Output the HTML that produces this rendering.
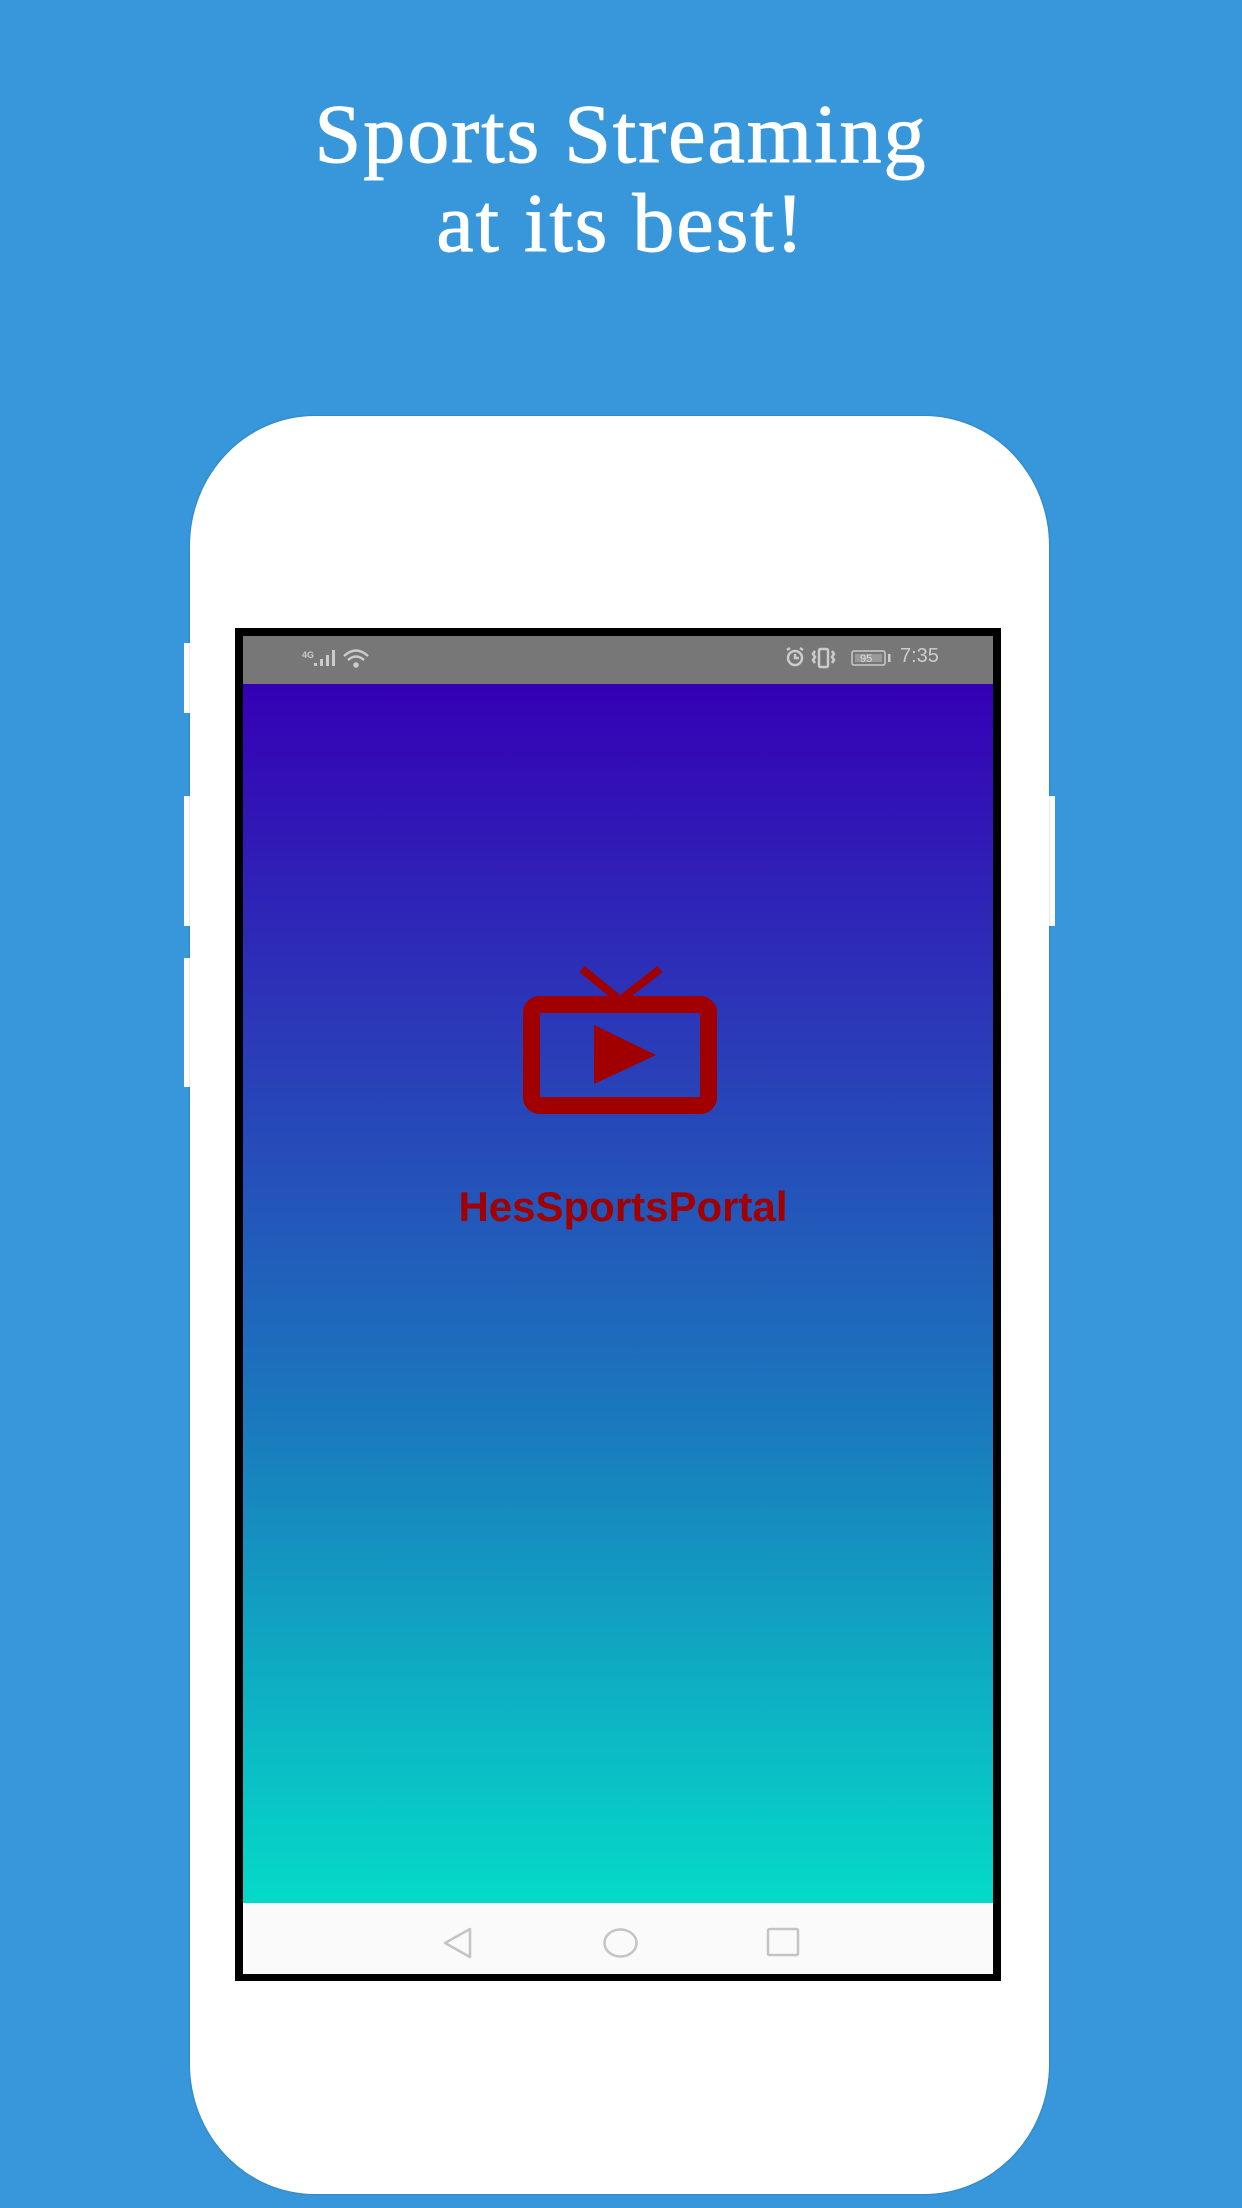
<!DOCTYPE html>
<html><head><meta charset="utf-8">
<style>
html,body{margin:0;padding:0}
body{width:1242px;height:2208px;background:#3797da;position:relative;overflow:hidden;font-family:"Liberation Sans",sans-serif}
.h{position:absolute;left:0;width:1242px;text-align:center;color:#fff;font-family:"Liberation Serif",serif;font-size:84px;letter-spacing:2px;line-height:89px;top:90px;-webkit-text-stroke:1px #fff}
.phone{position:absolute;left:190px;top:416px;width:859px;height:1778px;background:#fff;border-radius:125px/130px;box-shadow:0 0 2px rgba(0,0,0,.25)}
.btn{position:absolute;background:#fff}
.frame{position:absolute;left:235px;top:628px;width:766px;height:1353px;background:#000}
.status{position:absolute;left:243px;top:636px;width:750px;height:48px;background:#777}
.screen{position:absolute;left:243px;top:684px;width:750px;height:1219px;background:linear-gradient(#3500b5 0%,#2a3cb8 30%,#1a78bd 60%,#04dac8 100%)}
.nav{position:absolute;left:243px;top:1903px;width:750px;height:71px;background:#fafafa}
.time{position:absolute;left:900px;top:645px;color:#ccc;font-size:20px}
.title{position:absolute;left:443px;top:1183px;width:360px;text-align:center;color:#a00000;font-weight:bold;font-size:42px;letter-spacing:0px}
</style></head><body>
<div class="h">Sports Streaming<br>at its best!</div>
<div class="btn" style="left:184px;top:643px;width:8px;height:70px"></div>
<div class="btn" style="left:184px;top:796px;width:8px;height:130px"></div>
<div class="btn" style="left:184px;top:958px;width:8px;height:129px"></div>
<div class="btn" style="left:1046px;top:796px;width:9px;height:130px"></div>
<div class="phone"></div>
<div class="frame"></div>
<div class="status"></div>
<div class="screen"></div>
<div class="nav"></div>
<svg style="position:absolute;left:0;top:0" width="1242" height="2208">
 <g fill="#ccc" stroke="none">
  <text x="302" y="658" font-size="9" font-family="Liberation Sans" font-weight="bold" fill="#ccc">4G</text>
  <rect x="314" y="663" width="3" height="3"/><rect x="320" y="659" width="3" height="7"/><rect x="326" y="655" width="3" height="11"/><rect x="332" y="650" width="3" height="16"/>
 </g>
 <g fill="none" stroke="#ccc" stroke-width="2.5">
  <path d="M344 656 Q356 645 368 656"/><path d="M348 660 Q356 653 364 660"/><circle cx="356" cy="665" r="1.5" fill="#ccc"/>
  <circle cx="795" cy="658" r="7"/><path d="M795 654 V658 H799"/><path d="M787 650 l3 -2 M803 650 l-3 -2"/>
  <rect x="819" y="649" width="9" height="18" rx="1.5"/><path d="M815 651 l-2 3 2 3 -2 3 2 3 M832 651 l2 3 -2 3 2 3 -2 3"/>
  <rect x="852" y="651" width="33" height="14" rx="2" stroke-width="1.5"/>
 </g>
 <rect x="855" y="654" width="27" height="8" fill="#999"/>
 <rect x="888" y="654" width="2.5" height="8" fill="#ccc"/>
 <text x="860" y="662" font-size="11" fill="#ddd" font-family="Liberation Sans">95</text>
 <g fill="none" stroke="#a00000" stroke-width="17" stroke-linejoin="round">
  <rect x="531.5" y="1004.5" width="177" height="101" rx="8"/>
 </g>
 <g stroke="#a00000" stroke-width="8" stroke-linecap="butt">
  <line x1="582" y1="969" x2="621" y2="1001"/><line x1="660" y1="969" x2="619" y2="1001"/>
 </g>
 <polygon points="594,1025 594,1084 656,1055" fill="#a00000"/>
 <g fill="none" stroke="#c4c4c4" stroke-width="2.5" stroke-linejoin="round">
  <path d="M470 1929 L445 1943 L470 1957 Z"/>
  <ellipse cx="620.5" cy="1943" rx="16" ry="13.5"/>
  <rect x="768" y="1929" width="30" height="26" rx="1.5"/>
 </g>
</svg>
<div class="time">7:35</div>
<div class="title">HesSportsPortal</div>
</body></html>
